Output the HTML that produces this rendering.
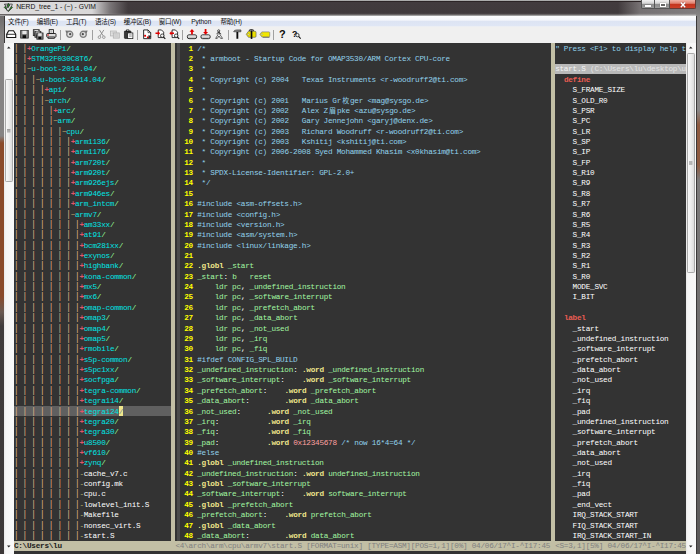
<!DOCTYPE html>
<html lang="zh"><head><meta charset="utf-8"><title>NERD_tree_1 - (~) - GVIM</title>
<style>
html,body{margin:0;padding:0}
body{width:700px;height:554px;overflow:hidden;position:relative;background:#333333;font-family:"Liberation Sans","Noto Sans CJK SC",sans-serif}
.r{position:absolute}
.s{position:absolute;white-space:pre;font-family:"Liberation Mono","Noto Sans CJK SC",monospace;font-size:7.7px;line-height:10.366px;height:10.366px;letter-spacing:-0.2558px}
.b{font-weight:bold}
.cjk{font-family:"Liberation Mono","Noto Sans CJK SC",monospace;font-size:7px;letter-spacing:0;width:8.73px;text-align:center}
.abs{position:absolute}
#title{left:0;top:0;width:700px;height:15.6px;background:linear-gradient(180deg,#b4b4b4 0,#a8a8a8 .7px,#2c2426 1px,#2c2426 1.5px,#423b3e 2.3px,#403a3c 13.2px,#565152 14.2px,#8a8888 15.1px,#a4a4a4 15.6px)}
#tglow{left:0;top:1.6px;width:130px;height:12.2px;background:linear-gradient(90deg,rgba(255,255,255,.82) 0,rgba(255,255,255,.8) 92px,rgba(255,255,255,.3) 110px,rgba(255,255,255,0) 128px)}
#ttext{left:16.2px;top:1.2px;height:12px;line-height:12px;font-size:6.75px;color:#111;white-space:pre;letter-spacing:0}
#menu{left:4.4px;top:15.6px;width:691.3px;height:11px;background:linear-gradient(180deg,#fdfdfe 0,#f4f6fb 4px,#dde4f3 5.5px,#dfe6f5 9.5px,#f2f2f2 11px)}
.mi{position:absolute;top:16.7px;height:10px;line-height:10px;font-size:6.55px;color:#111;white-space:pre;letter-spacing:-.2px}
#tool{left:4.4px;top:26.6px;width:691.3px;height:16.4px;background:#f0f0f0}
.sep{position:absolute;top:29.5px;width:1px;height:10px;background:#a0a0a0}
.fl{left:0;top:15.6px;width:4.4px;height:539px}
.fr{left:695.7px;top:0;width:4.3px;height:554px}
.sbar{position:absolute;top:43px;width:9.5px;height:511px;background:linear-gradient(90deg,#e9e9e9 0,#f6f6f6 2px,#f9f9f9 100%)}
.thumb{position:absolute;left:.4px;width:8.2px;border:.6px solid #aaa;border-radius:1.2px;background:linear-gradient(90deg,#f8f8f8 0,#ececec 50%,#dcdcdc 100%);box-sizing:border-box}
.ico{position:absolute;overflow:visible}
</style></head>
<body>
<div class="r" style="left:13.90px;top:405.81px;width:157.14px;height:10.37px;background:#606060;"></div>
<span class="s" style="left:13.90px;top:43.70px;color:#ecbc8a;transform:scaleY(1.15);transform-origin:50% 55%;">| |</span>
<span class="s b" style="left:27.00px;top:43.70px;color:#e0566a;">+</span>
<span class="s" style="left:31.36px;top:43.70px;color:#00e5e5;">OrangePi</span>
<span class="s" style="left:66.28px;top:43.70px;color:#98fb98;">/</span>
<span class="s" style="left:13.90px;top:54.07px;color:#ecbc8a;transform:scaleY(1.15);transform-origin:50% 55%;">| |</span>
<span class="s b" style="left:27.00px;top:54.07px;color:#e0566a;">+</span>
<span class="s" style="left:31.36px;top:54.07px;color:#00e5e5;">STM32F030C8T6</span>
<span class="s" style="left:88.11px;top:54.07px;color:#98fb98;">/</span>
<span class="s" style="left:13.90px;top:64.43px;color:#ecbc8a;transform:scaleY(1.15);transform-origin:50% 55%;">| |</span>
<span class="s" style="left:27.00px;top:64.43px;color:#c8b070;">~</span>
<span class="s" style="left:31.36px;top:64.43px;color:#00e5e5;">u-boot-2014.04</span>
<span class="s" style="left:92.47px;top:64.43px;color:#98fb98;">/</span>
<span class="s" style="left:13.90px;top:74.80px;color:#ecbc8a;transform:scaleY(1.15);transform-origin:50% 55%;">| | |</span>
<span class="s" style="left:35.73px;top:74.80px;color:#c8b070;">~</span>
<span class="s" style="left:40.09px;top:74.80px;color:#00e5e5;">u-boot-2014.04</span>
<span class="s" style="left:101.20px;top:74.80px;color:#98fb98;">/</span>
<span class="s" style="left:13.90px;top:85.16px;color:#ecbc8a;transform:scaleY(1.15);transform-origin:50% 55%;">| | | |</span>
<span class="s b" style="left:44.45px;top:85.16px;color:#e0566a;">+</span>
<span class="s" style="left:48.82px;top:85.16px;color:#00e5e5;">api</span>
<span class="s" style="left:61.91px;top:85.16px;color:#98fb98;">/</span>
<span class="s" style="left:13.90px;top:95.53px;color:#ecbc8a;transform:scaleY(1.15);transform-origin:50% 55%;">| | | |</span>
<span class="s" style="left:44.45px;top:95.53px;color:#c8b070;">~</span>
<span class="s" style="left:48.82px;top:95.53px;color:#00e5e5;">arch</span>
<span class="s" style="left:66.28px;top:95.53px;color:#98fb98;">/</span>
<span class="s" style="left:13.90px;top:105.90px;color:#ecbc8a;transform:scaleY(1.15);transform-origin:50% 55%;">| | | | |</span>
<span class="s b" style="left:53.19px;top:105.90px;color:#e0566a;">+</span>
<span class="s" style="left:57.55px;top:105.90px;color:#00e5e5;">arc</span>
<span class="s" style="left:70.65px;top:105.90px;color:#98fb98;">/</span>
<span class="s" style="left:13.90px;top:116.26px;color:#ecbc8a;transform:scaleY(1.15);transform-origin:50% 55%;">| | | | |</span>
<span class="s" style="left:53.19px;top:116.26px;color:#c8b070;">~</span>
<span class="s" style="left:57.55px;top:116.26px;color:#00e5e5;">arm</span>
<span class="s" style="left:70.65px;top:116.26px;color:#98fb98;">/</span>
<span class="s" style="left:13.90px;top:126.63px;color:#ecbc8a;transform:scaleY(1.15);transform-origin:50% 55%;">| | | | | |</span>
<span class="s" style="left:61.91px;top:126.63px;color:#c8b070;">~</span>
<span class="s" style="left:66.28px;top:126.63px;color:#00e5e5;">cpu</span>
<span class="s" style="left:79.38px;top:126.63px;color:#98fb98;">/</span>
<span class="s" style="left:13.90px;top:136.99px;color:#ecbc8a;transform:scaleY(1.15);transform-origin:50% 55%;">| | | | | | |</span>
<span class="s b" style="left:70.65px;top:136.99px;color:#e0566a;">+</span>
<span class="s" style="left:75.01px;top:136.99px;color:#00e5e5;">arm1136</span>
<span class="s" style="left:105.57px;top:136.99px;color:#98fb98;">/</span>
<span class="s" style="left:13.90px;top:147.36px;color:#ecbc8a;transform:scaleY(1.15);transform-origin:50% 55%;">| | | | | | |</span>
<span class="s b" style="left:70.65px;top:147.36px;color:#e0566a;">+</span>
<span class="s" style="left:75.01px;top:147.36px;color:#00e5e5;">arm1176</span>
<span class="s" style="left:105.57px;top:147.36px;color:#98fb98;">/</span>
<span class="s" style="left:13.90px;top:157.73px;color:#ecbc8a;transform:scaleY(1.15);transform-origin:50% 55%;">| | | | | | |</span>
<span class="s b" style="left:70.65px;top:157.73px;color:#e0566a;">+</span>
<span class="s" style="left:75.01px;top:157.73px;color:#00e5e5;">arm720t</span>
<span class="s" style="left:105.57px;top:157.73px;color:#98fb98;">/</span>
<span class="s" style="left:13.90px;top:168.09px;color:#ecbc8a;transform:scaleY(1.15);transform-origin:50% 55%;">| | | | | | |</span>
<span class="s b" style="left:70.65px;top:168.09px;color:#e0566a;">+</span>
<span class="s" style="left:75.01px;top:168.09px;color:#00e5e5;">arm920t</span>
<span class="s" style="left:105.57px;top:168.09px;color:#98fb98;">/</span>
<span class="s" style="left:13.90px;top:178.46px;color:#ecbc8a;transform:scaleY(1.15);transform-origin:50% 55%;">| | | | | | |</span>
<span class="s b" style="left:70.65px;top:178.46px;color:#e0566a;">+</span>
<span class="s" style="left:75.01px;top:178.46px;color:#00e5e5;">arm926ejs</span>
<span class="s" style="left:114.30px;top:178.46px;color:#98fb98;">/</span>
<span class="s" style="left:13.90px;top:188.82px;color:#ecbc8a;transform:scaleY(1.15);transform-origin:50% 55%;">| | | | | | |</span>
<span class="s b" style="left:70.65px;top:188.82px;color:#e0566a;">+</span>
<span class="s" style="left:75.01px;top:188.82px;color:#00e5e5;">arm946es</span>
<span class="s" style="left:109.93px;top:188.82px;color:#98fb98;">/</span>
<span class="s" style="left:13.90px;top:199.19px;color:#ecbc8a;transform:scaleY(1.15);transform-origin:50% 55%;">| | | | | | |</span>
<span class="s b" style="left:70.65px;top:199.19px;color:#e0566a;">+</span>
<span class="s" style="left:75.01px;top:199.19px;color:#00e5e5;">arm_intcm</span>
<span class="s" style="left:114.30px;top:199.19px;color:#98fb98;">/</span>
<span class="s" style="left:13.90px;top:209.56px;color:#ecbc8a;transform:scaleY(1.15);transform-origin:50% 55%;">| | | | | | |</span>
<span class="s" style="left:70.65px;top:209.56px;color:#c8b070;">~</span>
<span class="s" style="left:75.01px;top:209.56px;color:#00e5e5;">armv7</span>
<span class="s" style="left:96.84px;top:209.56px;color:#98fb98;">/</span>
<span class="s" style="left:13.90px;top:219.92px;color:#ecbc8a;transform:scaleY(1.15);transform-origin:50% 55%;">| | | | | | | |</span>
<span class="s b" style="left:79.38px;top:219.92px;color:#e0566a;">+</span>
<span class="s" style="left:83.74px;top:219.92px;color:#00e5e5;">am33xx</span>
<span class="s" style="left:109.93px;top:219.92px;color:#98fb98;">/</span>
<span class="s" style="left:13.90px;top:230.29px;color:#ecbc8a;transform:scaleY(1.15);transform-origin:50% 55%;">| | | | | | | |</span>
<span class="s b" style="left:79.38px;top:230.29px;color:#e0566a;">+</span>
<span class="s" style="left:83.74px;top:230.29px;color:#00e5e5;">at91</span>
<span class="s" style="left:101.20px;top:230.29px;color:#98fb98;">/</span>
<span class="s" style="left:13.90px;top:240.65px;color:#ecbc8a;transform:scaleY(1.15);transform-origin:50% 55%;">| | | | | | | |</span>
<span class="s b" style="left:79.38px;top:240.65px;color:#e0566a;">+</span>
<span class="s" style="left:83.74px;top:240.65px;color:#00e5e5;">bcm281xx</span>
<span class="s" style="left:118.66px;top:240.65px;color:#98fb98;">/</span>
<span class="s" style="left:13.90px;top:251.02px;color:#ecbc8a;transform:scaleY(1.15);transform-origin:50% 55%;">| | | | | | | |</span>
<span class="s b" style="left:79.38px;top:251.02px;color:#e0566a;">+</span>
<span class="s" style="left:83.74px;top:251.02px;color:#00e5e5;">exynos</span>
<span class="s" style="left:109.93px;top:251.02px;color:#98fb98;">/</span>
<span class="s" style="left:13.90px;top:261.39px;color:#ecbc8a;transform:scaleY(1.15);transform-origin:50% 55%;">| | | | | | | |</span>
<span class="s b" style="left:79.38px;top:261.39px;color:#e0566a;">+</span>
<span class="s" style="left:83.74px;top:261.39px;color:#00e5e5;">highbank</span>
<span class="s" style="left:118.66px;top:261.39px;color:#98fb98;">/</span>
<span class="s" style="left:13.90px;top:271.75px;color:#ecbc8a;transform:scaleY(1.15);transform-origin:50% 55%;">| | | | | | | |</span>
<span class="s b" style="left:79.38px;top:271.75px;color:#e0566a;">+</span>
<span class="s" style="left:83.74px;top:271.75px;color:#00e5e5;">kona-common</span>
<span class="s" style="left:131.75px;top:271.75px;color:#98fb98;">/</span>
<span class="s" style="left:13.90px;top:282.12px;color:#ecbc8a;transform:scaleY(1.15);transform-origin:50% 55%;">| | | | | | | |</span>
<span class="s b" style="left:79.38px;top:282.12px;color:#e0566a;">+</span>
<span class="s" style="left:83.74px;top:282.12px;color:#00e5e5;">mx5</span>
<span class="s" style="left:96.84px;top:282.12px;color:#98fb98;">/</span>
<span class="s" style="left:13.90px;top:292.48px;color:#ecbc8a;transform:scaleY(1.15);transform-origin:50% 55%;">| | | | | | | |</span>
<span class="s b" style="left:79.38px;top:292.48px;color:#e0566a;">+</span>
<span class="s" style="left:83.74px;top:292.48px;color:#00e5e5;">mx6</span>
<span class="s" style="left:96.84px;top:292.48px;color:#98fb98;">/</span>
<span class="s" style="left:13.90px;top:302.85px;color:#ecbc8a;transform:scaleY(1.15);transform-origin:50% 55%;">| | | | | | | |</span>
<span class="s b" style="left:79.38px;top:302.85px;color:#e0566a;">+</span>
<span class="s" style="left:83.74px;top:302.85px;color:#00e5e5;">omap-common</span>
<span class="s" style="left:131.75px;top:302.85px;color:#98fb98;">/</span>
<span class="s" style="left:13.90px;top:313.22px;color:#ecbc8a;transform:scaleY(1.15);transform-origin:50% 55%;">| | | | | | | |</span>
<span class="s b" style="left:79.38px;top:313.22px;color:#e0566a;">+</span>
<span class="s" style="left:83.74px;top:313.22px;color:#00e5e5;">omap3</span>
<span class="s" style="left:105.57px;top:313.22px;color:#98fb98;">/</span>
<span class="s" style="left:13.90px;top:323.58px;color:#ecbc8a;transform:scaleY(1.15);transform-origin:50% 55%;">| | | | | | | |</span>
<span class="s b" style="left:79.38px;top:323.58px;color:#e0566a;">+</span>
<span class="s" style="left:83.74px;top:323.58px;color:#00e5e5;">omap4</span>
<span class="s" style="left:105.57px;top:323.58px;color:#98fb98;">/</span>
<span class="s" style="left:13.90px;top:333.95px;color:#ecbc8a;transform:scaleY(1.15);transform-origin:50% 55%;">| | | | | | | |</span>
<span class="s b" style="left:79.38px;top:333.95px;color:#e0566a;">+</span>
<span class="s" style="left:83.74px;top:333.95px;color:#00e5e5;">omap5</span>
<span class="s" style="left:105.57px;top:333.95px;color:#98fb98;">/</span>
<span class="s" style="left:13.90px;top:344.31px;color:#ecbc8a;transform:scaleY(1.15);transform-origin:50% 55%;">| | | | | | | |</span>
<span class="s b" style="left:79.38px;top:344.31px;color:#e0566a;">+</span>
<span class="s" style="left:83.74px;top:344.31px;color:#00e5e5;">rmobile</span>
<span class="s" style="left:114.30px;top:344.31px;color:#98fb98;">/</span>
<span class="s" style="left:13.90px;top:354.68px;color:#ecbc8a;transform:scaleY(1.15);transform-origin:50% 55%;">| | | | | | | |</span>
<span class="s b" style="left:79.38px;top:354.68px;color:#e0566a;">+</span>
<span class="s" style="left:83.74px;top:354.68px;color:#00e5e5;">s5p-common</span>
<span class="s" style="left:127.39px;top:354.68px;color:#98fb98;">/</span>
<span class="s" style="left:13.90px;top:365.05px;color:#ecbc8a;transform:scaleY(1.15);transform-origin:50% 55%;">| | | | | | | |</span>
<span class="s b" style="left:79.38px;top:365.05px;color:#e0566a;">+</span>
<span class="s" style="left:83.74px;top:365.05px;color:#00e5e5;">s5pc1xx</span>
<span class="s" style="left:114.30px;top:365.05px;color:#98fb98;">/</span>
<span class="s" style="left:13.90px;top:375.41px;color:#ecbc8a;transform:scaleY(1.15);transform-origin:50% 55%;">| | | | | | | |</span>
<span class="s b" style="left:79.38px;top:375.41px;color:#e0566a;">+</span>
<span class="s" style="left:83.74px;top:375.41px;color:#00e5e5;">socfpga</span>
<span class="s" style="left:114.30px;top:375.41px;color:#98fb98;">/</span>
<span class="s" style="left:13.90px;top:385.78px;color:#ecbc8a;transform:scaleY(1.15);transform-origin:50% 55%;">| | | | | | | |</span>
<span class="s b" style="left:79.38px;top:385.78px;color:#e0566a;">+</span>
<span class="s" style="left:83.74px;top:385.78px;color:#00e5e5;">tegra-common</span>
<span class="s" style="left:136.12px;top:385.78px;color:#98fb98;">/</span>
<span class="s" style="left:13.90px;top:396.14px;color:#ecbc8a;transform:scaleY(1.15);transform-origin:50% 55%;">| | | | | | | |</span>
<span class="s b" style="left:79.38px;top:396.14px;color:#e0566a;">+</span>
<span class="s" style="left:83.74px;top:396.14px;color:#00e5e5;">tegra114</span>
<span class="s" style="left:118.66px;top:396.14px;color:#98fb98;">/</span>
<span class="s" style="left:13.90px;top:406.51px;color:#ecbc8a;transform:scaleY(1.15);transform-origin:50% 55%;">| | | | | | | |</span>
<span class="s b" style="left:79.38px;top:406.51px;color:#e0566a;">+</span>
<span class="s" style="left:83.74px;top:406.51px;color:#00e5e5;">tegra124</span>
<div class="r" style="left:118.66px;top:405.81px;width:4.37px;height:10.37px;background:#f0e68c;"></div>
<span class="s" style="left:118.66px;top:406.51px;color:#708090;">/</span>
<span class="s" style="left:13.90px;top:416.88px;color:#ecbc8a;transform:scaleY(1.15);transform-origin:50% 55%;">| | | | | | | |</span>
<span class="s b" style="left:79.38px;top:416.88px;color:#e0566a;">+</span>
<span class="s" style="left:83.74px;top:416.88px;color:#00e5e5;">tegra20</span>
<span class="s" style="left:114.30px;top:416.88px;color:#98fb98;">/</span>
<span class="s" style="left:13.90px;top:427.24px;color:#ecbc8a;transform:scaleY(1.15);transform-origin:50% 55%;">| | | | | | | |</span>
<span class="s b" style="left:79.38px;top:427.24px;color:#e0566a;">+</span>
<span class="s" style="left:83.74px;top:427.24px;color:#00e5e5;">tegra30</span>
<span class="s" style="left:114.30px;top:427.24px;color:#98fb98;">/</span>
<span class="s" style="left:13.90px;top:437.61px;color:#ecbc8a;transform:scaleY(1.15);transform-origin:50% 55%;">| | | | | | | |</span>
<span class="s b" style="left:79.38px;top:437.61px;color:#e0566a;">+</span>
<span class="s" style="left:83.74px;top:437.61px;color:#00e5e5;">u8500</span>
<span class="s" style="left:105.57px;top:437.61px;color:#98fb98;">/</span>
<span class="s" style="left:13.90px;top:447.97px;color:#ecbc8a;transform:scaleY(1.15);transform-origin:50% 55%;">| | | | | | | |</span>
<span class="s b" style="left:79.38px;top:447.97px;color:#e0566a;">+</span>
<span class="s" style="left:83.74px;top:447.97px;color:#00e5e5;">vf610</span>
<span class="s" style="left:105.57px;top:447.97px;color:#98fb98;">/</span>
<span class="s" style="left:13.90px;top:458.34px;color:#ecbc8a;transform:scaleY(1.15);transform-origin:50% 55%;">| | | | | | | |</span>
<span class="s b" style="left:79.38px;top:458.34px;color:#e0566a;">+</span>
<span class="s" style="left:83.74px;top:458.34px;color:#00e5e5;">zynq</span>
<span class="s" style="left:101.20px;top:458.34px;color:#98fb98;">/</span>
<span class="s" style="left:13.90px;top:468.71px;color:#ecbc8a;transform:scaleY(1.15);transform-origin:50% 55%;">| | | | | | | |</span>
<span class="s" style="left:79.38px;top:468.71px;color:#bdb76b;">-</span>
<span class="s" style="left:83.74px;top:468.71px;color:#ffffff;">cache_v7.c</span>
<span class="s" style="left:13.90px;top:479.07px;color:#ecbc8a;transform:scaleY(1.15);transform-origin:50% 55%;">| | | | | | | |</span>
<span class="s" style="left:79.38px;top:479.07px;color:#bdb76b;">-</span>
<span class="s" style="left:83.74px;top:479.07px;color:#ffffff;">config.mk</span>
<span class="s" style="left:13.90px;top:489.44px;color:#ecbc8a;transform:scaleY(1.15);transform-origin:50% 55%;">| | | | | | | |</span>
<span class="s" style="left:79.38px;top:489.44px;color:#bdb76b;">-</span>
<span class="s" style="left:83.74px;top:489.44px;color:#ffffff;">cpu.c</span>
<span class="s" style="left:13.90px;top:499.80px;color:#ecbc8a;transform:scaleY(1.15);transform-origin:50% 55%;">| | | | | | | |</span>
<span class="s" style="left:79.38px;top:499.80px;color:#bdb76b;">-</span>
<span class="s" style="left:83.74px;top:499.80px;color:#ffffff;">lowlevel_init.S</span>
<span class="s" style="left:13.90px;top:510.17px;color:#ecbc8a;transform:scaleY(1.15);transform-origin:50% 55%;">| | | | | | | |</span>
<span class="s" style="left:79.38px;top:510.17px;color:#bdb76b;">-</span>
<span class="s" style="left:83.74px;top:510.17px;color:#ffffff;">Makefile</span>
<span class="s" style="left:13.90px;top:520.54px;color:#ecbc8a;transform:scaleY(1.15);transform-origin:50% 55%;">| | | | | | | |</span>
<span class="s" style="left:79.38px;top:520.54px;color:#bdb76b;">-</span>
<span class="s" style="left:83.74px;top:520.54px;color:#ffffff;">nonsec_virt.S</span>
<span class="s" style="left:13.90px;top:530.90px;color:#ecbc8a;transform:scaleY(1.15);transform-origin:50% 55%;">| | | | | | | |</span>
<span class="s" style="left:79.38px;top:530.90px;color:#bdb76b;">-</span>
<span class="s" style="left:83.74px;top:530.90px;color:#ffffff;">start.S</span>
<div class="r" style="left:176.81px;top:43.00px;width:2.87px;height:497.57px;background:#4b4b4b;"></div>
<span class="s b" style="left:188.50px;top:43.70px;color:#ffff00;">1</span>
<span class="s" style="left:197.23px;top:43.70px;color:#92d2ec;">/*</span>
<span class="s b" style="left:188.50px;top:54.07px;color:#ffff00;">2</span>
<span class="s" style="left:201.60px;top:54.07px;color:#92d2ec;">* armboot - Startup Code for OMAP3530/ARM Cortex CPU-core</span>
<span class="s b" style="left:188.50px;top:64.43px;color:#ffff00;">3</span>
<span class="s" style="left:201.60px;top:64.43px;color:#92d2ec;">*</span>
<span class="s b" style="left:188.50px;top:74.80px;color:#ffff00;">4</span>
<span class="s" style="left:201.60px;top:74.80px;color:#92d2ec;">* Copyright (c) 2004   Texas Instruments &lt;r-woodruff2@ti.com&gt;</span>
<span class="s b" style="left:188.50px;top:85.16px;color:#ffff00;">5</span>
<span class="s" style="left:201.60px;top:85.16px;color:#92d2ec;">*</span>
<span class="s b" style="left:188.50px;top:95.53px;color:#ffff00;">6</span>
<span class="s" style="left:197.23px;top:95.53px;color:#92d2ec;"> * Copyright (c) 2001   Marius Gr</span>
<span class="s cjk" style="left:341.27px;top:95.53px;color:#92d2ec">枚</span>
<span class="s" style="left:350.00px;top:95.53px;color:#92d2ec;">ger &lt;mag@sysgo.de&gt;</span>
<span class="s b" style="left:188.50px;top:105.90px;color:#ffff00;">7</span>
<span class="s" style="left:197.23px;top:105.90px;color:#92d2ec;"> * Copyright (c) 2002   Alex Z</span>
<span class="s cjk" style="left:328.18px;top:105.90px;color:#92d2ec">眉</span>
<span class="s" style="left:336.91px;top:105.90px;color:#92d2ec;">pke &lt;azu@sysgo.de&gt;</span>
<span class="s b" style="left:188.50px;top:116.26px;color:#ffff00;">8</span>
<span class="s" style="left:201.60px;top:116.26px;color:#92d2ec;">* Copyright (c) 2002   Gary Jennejohn &lt;garyj@denx.de&gt;</span>
<span class="s b" style="left:188.50px;top:126.63px;color:#ffff00;">9</span>
<span class="s" style="left:201.60px;top:126.63px;color:#92d2ec;">* Copyright (c) 2003   Richard Woodruff &lt;r-woodruff2@ti.com&gt;</span>
<span class="s b" style="left:184.14px;top:136.99px;color:#ffff00;">10</span>
<span class="s" style="left:201.60px;top:136.99px;color:#92d2ec;">* Copyright (c) 2003   Kshitij &lt;kshitij@ti.com&gt;</span>
<span class="s b" style="left:184.14px;top:147.36px;color:#ffff00;">11</span>
<span class="s" style="left:201.60px;top:147.36px;color:#92d2ec;">* Copyright (c) 2006-2008 Syed Mohammed Khasim &lt;x0khasim@ti.com&gt;</span>
<span class="s b" style="left:184.14px;top:157.73px;color:#ffff00;">12</span>
<span class="s" style="left:201.60px;top:157.73px;color:#92d2ec;">*</span>
<span class="s b" style="left:184.14px;top:168.09px;color:#ffff00;">13</span>
<span class="s" style="left:201.60px;top:168.09px;color:#92d2ec;">* SPDX-License-Identifier: GPL-2.0+</span>
<span class="s b" style="left:184.14px;top:178.46px;color:#ffff00;">14</span>
<span class="s" style="left:201.60px;top:178.46px;color:#92d2ec;">*/</span>
<span class="s b" style="left:184.14px;top:188.82px;color:#ffff00;">15</span>
<span class="s b" style="left:184.14px;top:199.19px;color:#ffff00;">16</span>
<span class="s" style="left:197.23px;top:199.19px;color:#92d2ec;">#include &lt;asm-offsets.h&gt;</span>
<span class="s b" style="left:184.14px;top:209.56px;color:#ffff00;">17</span>
<span class="s" style="left:197.23px;top:209.56px;color:#92d2ec;">#include &lt;config.h&gt;</span>
<span class="s b" style="left:184.14px;top:219.92px;color:#ffff00;">18</span>
<span class="s" style="left:197.23px;top:219.92px;color:#92d2ec;">#include &lt;version.h&gt;</span>
<span class="s b" style="left:184.14px;top:230.29px;color:#ffff00;">19</span>
<span class="s" style="left:197.23px;top:230.29px;color:#92d2ec;">#include &lt;asm/system.h&gt;</span>
<span class="s b" style="left:184.14px;top:240.65px;color:#ffff00;">20</span>
<span class="s" style="left:197.23px;top:240.65px;color:#92d2ec;">#include &lt;linux/linkage.h&gt;</span>
<span class="s b" style="left:184.14px;top:251.02px;color:#ffff00;">21</span>
<span class="s b" style="left:184.14px;top:261.39px;color:#ffff00;">22</span>
<span class="s b" style="left:197.23px;top:261.39px;color:#f0e68c;">.globl</span>
<span class="s" style="left:227.79px;top:261.39px;color:#a2f8a2;">_start</span>
<span class="s b" style="left:184.14px;top:271.75px;color:#ffff00;">23</span>
<span class="s" style="left:197.23px;top:271.75px;color:#a2f8a2;">_start</span>
<span class="s" style="left:223.42px;top:271.75px;color:#ffffff;">:</span>
<span class="s" style="left:232.15px;top:271.75px;color:#a2f8a2;">b   reset</span>
<span class="s b" style="left:184.14px;top:282.12px;color:#ffff00;">24</span>
<span class="s" style="left:214.69px;top:282.12px;color:#a2f8a2;">ldr pc</span>
<span class="s" style="left:240.88px;top:282.12px;color:#ffffff;">,</span>
<span class="s" style="left:249.61px;top:282.12px;color:#a2f8a2;">_undefined_instruction</span>
<span class="s b" style="left:184.14px;top:292.48px;color:#ffff00;">25</span>
<span class="s" style="left:214.69px;top:292.48px;color:#a2f8a2;">ldr pc</span>
<span class="s" style="left:240.88px;top:292.48px;color:#ffffff;">,</span>
<span class="s" style="left:249.61px;top:292.48px;color:#a2f8a2;">_software_interrupt</span>
<span class="s b" style="left:184.14px;top:302.85px;color:#ffff00;">26</span>
<span class="s" style="left:214.69px;top:302.85px;color:#a2f8a2;">ldr pc</span>
<span class="s" style="left:240.88px;top:302.85px;color:#ffffff;">,</span>
<span class="s" style="left:249.61px;top:302.85px;color:#a2f8a2;">_prefetch_abort</span>
<span class="s b" style="left:184.14px;top:313.22px;color:#ffff00;">27</span>
<span class="s" style="left:214.69px;top:313.22px;color:#a2f8a2;">ldr pc</span>
<span class="s" style="left:240.88px;top:313.22px;color:#ffffff;">,</span>
<span class="s" style="left:249.61px;top:313.22px;color:#a2f8a2;">_data_abort</span>
<span class="s b" style="left:184.14px;top:323.58px;color:#ffff00;">28</span>
<span class="s" style="left:214.69px;top:323.58px;color:#a2f8a2;">ldr pc</span>
<span class="s" style="left:240.88px;top:323.58px;color:#ffffff;">,</span>
<span class="s" style="left:249.61px;top:323.58px;color:#a2f8a2;">_not_used</span>
<span class="s b" style="left:184.14px;top:333.95px;color:#ffff00;">29</span>
<span class="s" style="left:214.69px;top:333.95px;color:#a2f8a2;">ldr pc</span>
<span class="s" style="left:240.88px;top:333.95px;color:#ffffff;">,</span>
<span class="s" style="left:249.61px;top:333.95px;color:#a2f8a2;">_irq</span>
<span class="s b" style="left:184.14px;top:344.31px;color:#ffff00;">30</span>
<span class="s" style="left:214.69px;top:344.31px;color:#a2f8a2;">ldr pc</span>
<span class="s" style="left:240.88px;top:344.31px;color:#ffffff;">,</span>
<span class="s" style="left:249.61px;top:344.31px;color:#a2f8a2;">_fiq</span>
<span class="s b" style="left:184.14px;top:354.68px;color:#ffff00;">31</span>
<span class="s" style="left:197.23px;top:354.68px;color:#92d2ec;">#ifdef CONFIG_SPL_BUILD</span>
<span class="s b" style="left:184.14px;top:365.05px;color:#ffff00;">32</span>
<span class="s" style="left:197.23px;top:365.05px;color:#a2f8a2;">_undefined_instruction</span>
<span class="s" style="left:293.26px;top:365.05px;color:#ffffff;">:</span>
<span class="s b" style="left:301.99px;top:365.05px;color:#f0e68c;">.word</span>
<span class="s" style="left:328.18px;top:365.05px;color:#a2f8a2;">_undefined_instruction</span>
<span class="s b" style="left:184.14px;top:375.41px;color:#ffff00;">33</span>
<span class="s" style="left:197.23px;top:375.41px;color:#a2f8a2;">_software_interrupt</span>
<span class="s" style="left:280.16px;top:375.41px;color:#ffffff;">:</span>
<span class="s b" style="left:301.99px;top:375.41px;color:#f0e68c;">.word</span>
<span class="s" style="left:328.18px;top:375.41px;color:#a2f8a2;">_software_interrupt</span>
<span class="s b" style="left:184.14px;top:385.78px;color:#ffff00;">34</span>
<span class="s" style="left:197.23px;top:385.78px;color:#a2f8a2;">_prefetch_abort</span>
<span class="s" style="left:262.70px;top:385.78px;color:#ffffff;">:</span>
<span class="s b" style="left:284.53px;top:385.78px;color:#f0e68c;">.word</span>
<span class="s" style="left:310.72px;top:385.78px;color:#a2f8a2;">_prefetch_abort</span>
<span class="s b" style="left:184.14px;top:396.14px;color:#ffff00;">35</span>
<span class="s" style="left:197.23px;top:396.14px;color:#a2f8a2;">_data_abort</span>
<span class="s" style="left:245.25px;top:396.14px;color:#ffffff;">:</span>
<span class="s b" style="left:284.53px;top:396.14px;color:#f0e68c;">.word</span>
<span class="s" style="left:310.72px;top:396.14px;color:#a2f8a2;">_data_abort</span>
<span class="s b" style="left:184.14px;top:406.51px;color:#ffff00;">36</span>
<span class="s" style="left:197.23px;top:406.51px;color:#a2f8a2;">_not_used</span>
<span class="s" style="left:236.52px;top:406.51px;color:#ffffff;">:</span>
<span class="s b" style="left:267.07px;top:406.51px;color:#f0e68c;">.word</span>
<span class="s" style="left:293.26px;top:406.51px;color:#a2f8a2;">_not_used</span>
<span class="s b" style="left:184.14px;top:416.88px;color:#ffff00;">37</span>
<span class="s" style="left:197.23px;top:416.88px;color:#a2f8a2;">_irq</span>
<span class="s" style="left:214.69px;top:416.88px;color:#ffffff;">:</span>
<span class="s b" style="left:267.07px;top:416.88px;color:#f0e68c;">.word</span>
<span class="s" style="left:293.26px;top:416.88px;color:#a2f8a2;">_irq</span>
<span class="s b" style="left:184.14px;top:427.24px;color:#ffff00;">38</span>
<span class="s" style="left:197.23px;top:427.24px;color:#a2f8a2;">_fiq</span>
<span class="s" style="left:214.69px;top:427.24px;color:#ffffff;">:</span>
<span class="s b" style="left:267.07px;top:427.24px;color:#f0e68c;">.word</span>
<span class="s" style="left:293.26px;top:427.24px;color:#a2f8a2;">_fiq</span>
<span class="s b" style="left:184.14px;top:437.61px;color:#ffff00;">39</span>
<span class="s" style="left:197.23px;top:437.61px;color:#a2f8a2;">_pad</span>
<span class="s" style="left:214.69px;top:437.61px;color:#ffffff;">:</span>
<span class="s b" style="left:267.07px;top:437.61px;color:#f0e68c;">.word</span>
<span class="s" style="left:293.26px;top:437.61px;color:#ffa0a0;">0x12345678</span>
<span class="s" style="left:341.27px;top:437.61px;color:#92d2ec;">/* now 16*4=64 */</span>
<span class="s b" style="left:184.14px;top:447.97px;color:#ffff00;">40</span>
<span class="s" style="left:197.23px;top:447.97px;color:#92d2ec;">#else</span>
<span class="s b" style="left:184.14px;top:458.34px;color:#ffff00;">41</span>
<span class="s b" style="left:197.23px;top:458.34px;color:#f0e68c;">.globl</span>
<span class="s" style="left:227.79px;top:458.34px;color:#a2f8a2;">_undefined_instruction</span>
<span class="s b" style="left:184.14px;top:468.71px;color:#ffff00;">42</span>
<span class="s" style="left:197.23px;top:468.71px;color:#a2f8a2;">_undefined_instruction</span>
<span class="s" style="left:293.26px;top:468.71px;color:#ffffff;">:</span>
<span class="s b" style="left:301.99px;top:468.71px;color:#f0e68c;">.word</span>
<span class="s" style="left:328.18px;top:468.71px;color:#a2f8a2;">undefined_instruction</span>
<span class="s b" style="left:184.14px;top:479.07px;color:#ffff00;">43</span>
<span class="s b" style="left:197.23px;top:479.07px;color:#f0e68c;">.globl</span>
<span class="s" style="left:227.79px;top:479.07px;color:#a2f8a2;">_software_interrupt</span>
<span class="s b" style="left:184.14px;top:489.44px;color:#ffff00;">44</span>
<span class="s" style="left:197.23px;top:489.44px;color:#a2f8a2;">_software_interrupt</span>
<span class="s" style="left:280.16px;top:489.44px;color:#ffffff;">:</span>
<span class="s b" style="left:301.99px;top:489.44px;color:#f0e68c;">.word</span>
<span class="s" style="left:328.18px;top:489.44px;color:#a2f8a2;">software_interrupt</span>
<span class="s b" style="left:184.14px;top:499.80px;color:#ffff00;">45</span>
<span class="s b" style="left:197.23px;top:499.80px;color:#f0e68c;">.globl</span>
<span class="s" style="left:227.79px;top:499.80px;color:#a2f8a2;">_prefetch_abort</span>
<span class="s b" style="left:184.14px;top:510.17px;color:#ffff00;">46</span>
<span class="s" style="left:197.23px;top:510.17px;color:#a2f8a2;">_prefetch_abort</span>
<span class="s" style="left:262.70px;top:510.17px;color:#ffffff;">:</span>
<span class="s b" style="left:284.53px;top:510.17px;color:#f0e68c;">.word</span>
<span class="s" style="left:310.72px;top:510.17px;color:#a2f8a2;">prefetch_abort</span>
<span class="s b" style="left:184.14px;top:520.54px;color:#ffff00;">47</span>
<span class="s b" style="left:197.23px;top:520.54px;color:#f0e68c;">.globl</span>
<span class="s" style="left:227.79px;top:520.54px;color:#a2f8a2;">_data_abort</span>
<span class="s b" style="left:184.14px;top:530.90px;color:#ffff00;">48</span>
<span class="s" style="left:197.23px;top:530.90px;color:#a2f8a2;">_data_abort</span>
<span class="s" style="left:245.25px;top:530.90px;color:#ffffff;">:</span>
<span class="s b" style="left:284.53px;top:530.90px;color:#f0e68c;">.word</span>
<span class="s" style="left:310.72px;top:530.90px;color:#a2f8a2;">data_abort</span>
<div class="r" style="left:555.16px;top:63.73px;width:130.95px;height:10.37px;background:#b9b9b9;"></div>
<span class="s" style="left:555.16px;top:43.70px;color:#92d2ec;">&quot; Press &lt;F1&gt; to display help t</span>
<span class="s" style="left:555.16px;top:64.43px;color:#f4f4f4;">start.S</span>
<span class="s" style="left:590.08px;top:64.43px;color:#e4e4e4;">(C:\Users\lu\desktop\u</span>
<span class="s b" style="left:563.89px;top:74.80px;color:#ea5c52;">define</span>
<span class="s" style="left:572.62px;top:85.16px;color:#ffffff;">S_FRAME_SIZE</span>
<span class="s" style="left:572.62px;top:95.53px;color:#ffffff;">S_OLD_R0</span>
<span class="s" style="left:572.62px;top:105.90px;color:#ffffff;">S_PSR</span>
<span class="s" style="left:572.62px;top:116.26px;color:#ffffff;">S_PC</span>
<span class="s" style="left:572.62px;top:126.63px;color:#ffffff;">S_LR</span>
<span class="s" style="left:572.62px;top:136.99px;color:#ffffff;">S_SP</span>
<span class="s" style="left:572.62px;top:147.36px;color:#ffffff;">S_IP</span>
<span class="s" style="left:572.62px;top:157.73px;color:#ffffff;">S_FP</span>
<span class="s" style="left:572.62px;top:168.09px;color:#ffffff;">S_R10</span>
<span class="s" style="left:572.62px;top:178.46px;color:#ffffff;">S_R9</span>
<span class="s" style="left:572.62px;top:188.82px;color:#ffffff;">S_R8</span>
<span class="s" style="left:572.62px;top:199.19px;color:#ffffff;">S_R7</span>
<span class="s" style="left:572.62px;top:209.56px;color:#ffffff;">S_R6</span>
<span class="s" style="left:572.62px;top:219.92px;color:#ffffff;">S_R5</span>
<span class="s" style="left:572.62px;top:230.29px;color:#ffffff;">S_R4</span>
<span class="s" style="left:572.62px;top:240.65px;color:#ffffff;">S_R3</span>
<span class="s" style="left:572.62px;top:251.02px;color:#ffffff;">S_R2</span>
<span class="s" style="left:572.62px;top:261.39px;color:#ffffff;">S_R1</span>
<span class="s" style="left:572.62px;top:271.75px;color:#ffffff;">S_R0</span>
<span class="s" style="left:572.62px;top:282.12px;color:#ffffff;">MODE_SVC</span>
<span class="s" style="left:572.62px;top:292.48px;color:#ffffff;">I_BIT</span>
<span class="s b" style="left:563.89px;top:313.22px;color:#ea5c52;">label</span>
<span class="s" style="left:572.62px;top:323.58px;color:#ffffff;">_start</span>
<span class="s" style="left:572.62px;top:333.95px;color:#ffffff;">_undefined_instruction</span>
<span class="s" style="left:572.62px;top:344.31px;color:#ffffff;">_software_interrupt</span>
<span class="s" style="left:572.62px;top:354.68px;color:#ffffff;">_prefetch_abort</span>
<span class="s" style="left:572.62px;top:365.05px;color:#ffffff;">_data_abort</span>
<span class="s" style="left:572.62px;top:375.41px;color:#ffffff;">_not_used</span>
<span class="s" style="left:572.62px;top:385.78px;color:#ffffff;">_irq</span>
<span class="s" style="left:572.62px;top:396.14px;color:#ffffff;">_fiq</span>
<span class="s" style="left:572.62px;top:406.51px;color:#ffffff;">_pad</span>
<span class="s" style="left:572.62px;top:416.88px;color:#ffffff;">_undefined_instruction</span>
<span class="s" style="left:572.62px;top:427.24px;color:#ffffff;">_software_interrupt</span>
<span class="s" style="left:572.62px;top:437.61px;color:#ffffff;">_prefetch_abort</span>
<span class="s" style="left:572.62px;top:447.97px;color:#ffffff;">_data_abort</span>
<span class="s" style="left:572.62px;top:458.34px;color:#ffffff;">_not_used</span>
<span class="s" style="left:572.62px;top:468.71px;color:#ffffff;">_irq</span>
<span class="s" style="left:572.62px;top:479.07px;color:#ffffff;">_fiq</span>
<span class="s" style="left:572.62px;top:489.44px;color:#ffffff;">_pad</span>
<span class="s" style="left:572.62px;top:499.80px;color:#ffffff;">_end_vect</span>
<span class="s" style="left:572.62px;top:510.17px;color:#ffffff;">IRQ_STACK_START</span>
<span class="s" style="left:572.62px;top:520.54px;color:#ffffff;">FIQ_STACK_START</span>
<span class="s" style="left:572.62px;top:530.90px;color:#ffffff;">IRQ_STACK_START_IN</span>
<div class="r" style="left:13.90px;top:540.57px;width:672.21px;height:10.67px;background:#c2bfa5;"></div>
<div class="r" style="left:171.04px;top:43.00px;width:4.37px;height:498.57px;background:#c2bfa5;"></div>
<div class="r" style="left:550.79px;top:43.00px;width:4.37px;height:498.57px;background:#c2bfa5;"></div>
<span class="s b" style="left:13.90px;top:541.27px;color:#1a1a1a;">C:\Users\lu</span>
<span class="s" style="left:175.41px;top:541.27px;color:#808080;">&lt;4\arch\arm\cpu\armv7\start.S [FORMAT=unix] [TYPE=ASM][POS=1,1][0%] 04/06/17^I-^I17:45</span>
<span class="s" style="left:555.16px;top:541.27px;color:#808080;">&lt;S=3,1][5%] 04/06/17^I-^I17:45</span>
<div class="abs" id="title"></div>
<div class="abs" id="tglow"></div>
<svg class="ico" style="left:4.4px;top:2.8px" width="8.8" height="8.8" viewBox="0 0 16 16"><path d="M8 .5 L15.5 8 L8 15.5 L.5 8 Z" fill="#2a8f2a" stroke="#1a1a1a" stroke-width="1.2"/><path d="M1 2 H7 V3.5 H6 L7 9 L10.5 3.5 H9.5 V2 H15 V3.5 L8.5 14 H5.5 L3 3.5 H1 Z" fill="#d8d8d8" stroke="#111" stroke-width="1.1"/></svg>
<div class="abs" id="ttext">NERD_tree_1 - (~) - GVIM</div>
<!-- caption buttons -->
<div class="abs" style="left:618px;top:1.6px;width:78px;height:14px;background:linear-gradient(90deg,rgba(255,255,255,0) 0,rgba(255,255,255,.28) 22px,rgba(255,255,255,.34) 78px)"></div>
<div class="abs" style="left:640.5px;top:0;width:14.6px;height:8.8px;background:linear-gradient(180deg,#f2f2f2 0,#d4d4d4 42%,#8c8c8c 52%,#9c9c9c 100%);border-radius:0 0 0 2px;border:.6px solid #555;border-top:0;box-sizing:border-box"></div>
<div class="abs" style="left:655.1px;top:0;width:14.6px;height:8.8px;background:linear-gradient(180deg,#f2f2f2 0,#d4d4d4 42%,#8c8c8c 52%,#9c9c9c 100%);border:.6px solid #555;border-top:0;border-left:0;box-sizing:border-box"></div>
<div class="abs" style="left:669.7px;top:0;width:26px;height:9.2px;background:linear-gradient(180deg,#f0b4a8 0,#e0806e 42%,#c4341e 52%,#cc4028 100%);border-radius:0 0 2px 0;border:.6px solid #6a3a34;border-top:0;border-left:0;box-sizing:border-box"></div>
<div class="abs" style="left:645.4px;top:5.2px;width:6px;height:1.8px;background:#fff;box-shadow:0 0 .9px #333"></div>
<div class="abs" style="left:660px;top:2.9px;width:6px;height:4.2px;border:1.1px solid #fff;border-top-width:1.7px;box-sizing:border-box;box-shadow:0 0 .9px #333;background:#666"></div>
<svg class="ico" style="left:680.2px;top:1.9px" width="6" height="5.8" viewBox="0 0 6 5.8"><path d="M.8 .6 L5.2 5.2 M5.2 .6 L.8 5.2" stroke="#5a2a2a" stroke-width="2.4" fill="none" opacity=".5"/><path d="M.8 .6 L5.2 5.2 M5.2 .6 L.8 5.2" stroke="#fff" stroke-width="1.5" fill="none"/></svg>

<div class="abs" id="menu"></div>
<span class="mi" style="left:8.1px">文件(F)</span>
<span class="mi" style="left:36.8px">编辑(E)</span>
<span class="mi" style="left:65.9px">工具(T)</span>
<span class="mi" style="left:95px">语法(S)</span>
<span class="mi" style="left:123.7px">缓冲区(B)</span>
<span class="mi" style="left:158.7px">窗口(W)</span>
<span class="mi" style="left:191.2px;letter-spacing:-.05px">Python</span>
<span class="mi" style="left:220.5px">帮助(H)</span>

<div class="abs" id="tool"></div>
<div class="sep" style="left:59.6px"></div>
<div class="sep" style="left:91.8px"></div>
<div class="sep" style="left:136.8px"></div>
<div class="sep" style="left:182.2px"></div>
<div class="sep" style="left:227.7px"></div>
<div class="sep" style="left:273.3px"></div>
<svg class="ico" style="left:0;top:26.6px" width="320" height="16.4" viewBox="0 0 320 16.4"><g transform="translate(11.00,7.30) scale(0.5456)"><path d="M-8,0 L-4.5,-6.5 H4.5 L8.5,0 V6 H-8 Z" fill="#fff" stroke="#111" stroke-width="2"/><path d="M-8,0 H8.5" stroke="#111" stroke-width="1.6"/></g><g transform="translate(24.40,7.30) scale(0.5456)"><rect x="-7" y="-7" width="14" height="14" fill="#7a7a7a" stroke="#222" stroke-width="1.3"/><rect x="-3.92" y="-6.4" width="7.84" height="5.88" fill="#e6e6e6"/><rect x="-3.5" y="1.68" width="6.3" height="5.32" fill="#0a0a0a"/></g><g transform="translate(38.10,7.30) scale(0.5456)"><rect x="-9" y="-8.5" width="11" height="11" fill="#7a7a7a" stroke="#222" stroke-width="1.3"/><rect x="-6.58" y="-7.9" width="6.16" height="4.62" fill="#e6e6e6"/><rect x="-6.25" y="-1.68" width="4.95" height="4.18" fill="#0a0a0a"/><rect x="-6" y="-5.5" width="11" height="11" fill="#7a7a7a" stroke="#222" stroke-width="1.3"/><rect x="-3.58" y="-4.9" width="6.16" height="4.62" fill="#e6e6e6"/><rect x="-3.25" y="1.32" width="4.95" height="4.18" fill="#0a0a0a"/><rect x="-2.5" y="-2.5" width="11.5" height="11.5" fill="#7a7a7a" stroke="#222" stroke-width="1.3"/><rect x="0.03" y="-1.9" width="6.44" height="4.83" fill="#e6e6e6"/><rect x="0.375" y="4.63" width="5.175" height="4.37" fill="#0a0a0a"/></g><g transform="translate(51.30,7.30) scale(0.5456)"><rect x="-4" y="-8.5" width="8" height="7" fill="#fff" stroke="#111" stroke-width="1.5"/><rect x="-8.5" y="-1.5" width="17" height="7" rx="1.5" fill="#dcdcdc" stroke="#111" stroke-width="1.6"/><rect x="-6" y="5" width="12" height="3" fill="#bbb" stroke="#111" stroke-width="1.2"/><circle cx="-6" cy="1.3" r="1.4" fill="#e00000"/><path d="M-2,-6H2M-2,-4H2" stroke="#555" stroke-width=".9"/></g><g transform="translate(69.70,7.30) scale(0.5456)"><circle cx="0" cy="0" r="5.6" fill="#e0e0e0" stroke="#808080" stroke-width="2.4"/><circle cx=".8" cy="-.3" r="2.1" fill="#4a4a4a"/><path d="M-8,-7 L-2,-6.5 L-6.5,-2 Z" fill="#707070"/></g><g transform="translate(83.20,7.30) scale(0.5456)"><circle cx="0" cy="0" r="5.6" fill="#e0e0e0" stroke="#808080" stroke-width="2.4"/><circle cx="-.8" cy="-.3" r="2.1" fill="#4a4a4a"/><path d="M8,-7 L2,-6.5 L6.5,-2 Z" fill="#707070"/></g><g transform="translate(101.60,7.30) scale(0.5456)"><path d="M-4,-8 L3,3 M4,-8 L-3,3" stroke="#8a8a8a" stroke-width="1.7" fill="none"/><circle cx="-4" cy="5.3" r="2.4" fill="none" stroke="#8a8a8a" stroke-width="1.5"/><circle cx="4" cy="5.3" r="2.4" fill="none" stroke="#8a8a8a" stroke-width="1.5"/></g><g transform="translate(114.90,7.30) scale(0.5456)"><rect x="-8" y="-6" width="10.5" height="9" fill="#e2e2e2" stroke="#b4b4b4" stroke-width="1.4"/><rect x="-3" y="-2.5" width="11" height="9.5" fill="#dadada" stroke="#b0b0b0" stroke-width="1.4"/><path d="M-6,-3.5H0M-6,-1.5H-4M-1,0H6M-1,2H6M-1,4H6" stroke="#c4c4c4" stroke-width=".9"/></g><g transform="translate(128.50,7.30) scale(0.5456)"><rect x="-7.5" y="-6" width="12" height="13.5" rx="1" fill="#3a3a3a" stroke="#111" stroke-width="1.2"/><rect x="-4.5" y="-9" width="6" height="4.5" rx="1" fill="#1c1c1c"/><rect x="-3" y="-7.6" width="3" height="1.6" fill="#bbb"/><rect x="-1.5" y="-2.5" width="9.5" height="10.5" fill="#fff" stroke="#111" stroke-width="1.3"/><path d="M1,1H6M1,3.5H6" stroke="#555" stroke-width="1"/></g><g transform="translate(146.90,7.30) scale(0.5456)"><path d="M-6,-8 H2 L7,-3 V8 H-6 Z" fill="#fff" stroke="#111" stroke-width="1.6"/><path d="M2,-8 V-3 H7" fill="none" stroke="#111" stroke-width="1.2"/><rect x="-5" y="1" width="3.4" height="3.4" fill="#e00000"/><rect x="0" y="4" width="3.6" height="3" fill="#e00000"/><path d="M3,1 L8,4.5 L3,8 Z" fill="#222"/></g><g transform="translate(160.40,7.30) scale(0.5456)"><path d="M-4,-8 H2 L6,-4 V6 H-4 Z" fill="#fff" stroke="#111" stroke-width="1.5"/><path d="M-9,-3.5 H-4.5 V-6 L-.5,-2 L-4.5,2 V-.5 H-9 Z" fill="#e00000"/><circle cx="3.4" cy="2.6" r="3.2" fill="#f4f4f4" stroke="#111" stroke-width="1.4"/><path d="M5.8,5 L9,8.4" stroke="#111" stroke-width="1.9"/></g><g transform="translate(174.30,7.30) scale(0.5456)"><path d="M-4,-8 H2 L6,-4 V6 H-4 Z" fill="#fff" stroke="#111" stroke-width="1.5"/><path d="M-.5,-3.5 H-5 V-6 L-9,-2 L-5,2 V-.5 H-.5 Z" fill="#e00000"/><circle cx="3.4" cy="2.6" r="3.2" fill="#f4f4f4" stroke="#111" stroke-width="1.4"/><path d="M5.8,5 L9,8.4" stroke="#111" stroke-width="1.9"/></g><g transform="translate(192.00,7.30) scale(0.5456)"><rect x="-8.5" y="1" width="17" height="7" rx="3" fill="#c8c8c8" stroke="#1a1a1a" stroke-width="1.6"/><path d="M-7,3.2H7" stroke="#fff" stroke-width="1.2"/><path d="M0,-9.5 L-4.5,-4.5 H-1.6 V.5 H1.6 V-4.5 H4.5 Z" fill="#e00000"/></g><g transform="translate(205.60,7.30) scale(0.5456)"><rect x="-8.5" y="1" width="17" height="7" rx="3" fill="#c8c8c8" stroke="#1a1a1a" stroke-width="1.6"/><path d="M-7,3.2H7" stroke="#fff" stroke-width="1.2"/><path d="M0,.8 L-4.5,-4.2 H-1.6 V-9.5 H1.6 V-4.2 H4.5 Z" fill="#e00000"/></g><g transform="translate(219.00,7.30) scale(0.5456)"><circle cx="-.5" cy="-6.3" r="2" fill="#fff" stroke="#111" stroke-width="1.3"/><path d="M-1,-4 L-2,1 L-6,7.5 H-3 L0,3 L3,7.5 H6.5 L1.5,0 L1,-4 Z" fill="#fff" stroke="#111" stroke-width="1.2"/><path d="M-4.5,-1 L-1,-3.5 L4,-.5" fill="none" stroke="#111" stroke-width="1.3"/></g><g transform="translate(237.40,7.30) scale(0.5456)"><path d="M-6.8,-4.8 Q-6,-8 -1,-8 H6.5 V-4.6 H-3 Q-5.5,-4.6 -6.8,-4.8 Z" fill="#8a8a8a" stroke="#222" stroke-width="1.1"/><rect x="-1.7" y="-4.2" width="3.4" height="12.4" fill="#0a0a0a"/></g><g transform="translate(251.20,7.30) scale(0.5456)"><path d="M-9,0 L-5,-5.5 H7 Q9,-5.5 9,-3.5 V3.5 Q9,5.5 7,5.5 H-5 Z" fill="#ece000" stroke="#555" stroke-width="1.1"/><circle cx="-5" cy="0" r="1.2" fill="#fff" stroke="#666" stroke-width=".6"/><path d="M-4,-6.5 Q.5,-10.5 5,-6.5" fill="none" stroke="#444" stroke-width="2.2"/><rect x="-.8" y="-7" width="3" height="15.5" fill="#0a0a0a"/></g><g transform="translate(264.90,7.40) scale(0.5456)"><path d="M-9,0 L-5.5,-4.6 H7.5 Q9,-4.6 9,-3 V3 Q9,4.6 7.5,4.6 H-5.5 Z" fill="#f2e800" stroke="#777" stroke-width="1.2"/><circle cx="-5.3" cy="0" r="1.2" fill="#fff" stroke="#666" stroke-width=".6"/><path d="M-4,5.6H8.5" stroke="#555" stroke-width="1.2"/></g><g transform="translate(282.40,7.30) scale(0.5456)"><text x="0" y="7.4" text-anchor="middle" font-family="Liberation Sans,sans-serif" font-weight="bold" font-size="20" fill="#0a0a0a">?</text></g><g transform="translate(296.40,7.30) scale(0.5456)"><text x="-3.2" y="4.8" text-anchor="middle" font-family="Liberation Sans,sans-serif" font-weight="bold" font-size="16" fill="#0a0a0a">?</text><circle cx="2" cy="1.5" r="3.1" fill="none" stroke="#111" stroke-width="1.4"/><path d="M4.2,3.8 L8,8" stroke="#111" stroke-width="1.9"/></g></svg>

<!-- frame -->
<div class="abs fl" style="background:linear-gradient(180deg,#6e6c6c 0,#858383 20px,#858383 120px,#8a4a2a 127px,#8a4a2a 280px,#6a5a52 296px,#403c3c 310px,#3c3838 539px)"></div>
<div class="abs fr" style="background:linear-gradient(180deg,#6e6c6c 0,#8a8888 18px,#8a8888 110px,#8e5a40 125px,#8e5a40 165px,#7c7a7a 180px,#6a6868 400px,#5a5858 554px)"></div>
<div class="abs" style="left:695.7px;top:15.6px;width:1px;height:539px;background:#3a3838"></div>
<div class="abs" style="left:3.6px;top:15.6px;width:.8px;height:539px;background:#3a3838"></div>

<!-- scrollbars -->
<div class="sbar" style="left:4.4px"><div class="thumb" style="top:36px;height:102.6px"></div>
<svg class="ico" style="left:0;top:0" width="9.5" height="508"><path d="M3 5.6 L4.75 3.6 L6.5 5.6 Z M3 502.6 L4.75 504.6 L6.5 502.6 Z" fill="#222"/><path d="M3 86.5h3.4M3 87.7h3.4M3 88.9h3.4" stroke="#555" stroke-width=".5"/></svg></div>
<div class="sbar" style="left:686.2px"><div class="thumb" style="top:10px;height:219.5px"></div>
<svg class="ico" style="left:0;top:0" width="9.5" height="508"><path d="M3 5.6 L4.75 3.6 L6.5 5.6 Z M3 502.6 L4.75 504.6 L6.5 502.6 Z" fill="#222"/><path d="M3 118.8h3.4M3 120h3.4M3 121.2h3.4" stroke="#555" stroke-width=".5"/></svg></div>

</body></html>
